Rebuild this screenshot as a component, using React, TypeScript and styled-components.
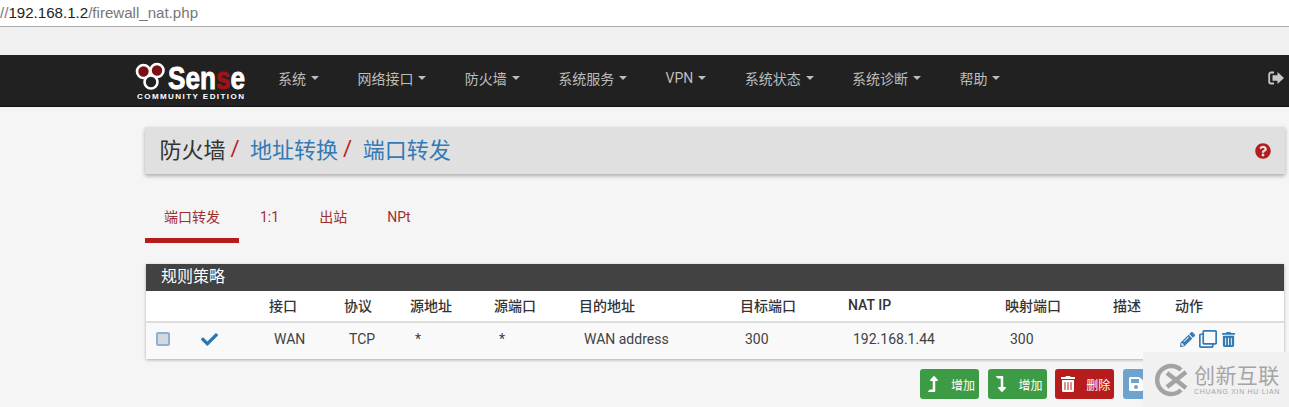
import React from 'react';
import styled, { createGlobalStyle } from 'styled-components';
import {
  FaCheck,
  FaLevelDownAlt,
  FaLevelUpAlt,
  FaPencilAlt,
  FaQuestionCircle,
  FaRegClone,
  FaSave,
  FaTrashAlt,
} from 'react-icons/fa';

const Global = createGlobalStyle`
  html, body {
    margin: 0;
    padding: 0;
    height: 407px;
    overflow: hidden;
    background: #f5f5f5;
    font-family: Roboto, "Noto Sans CJK SC", sans-serif;
    color: #333;
  }
`;

const Page = styled.div`
  position: relative;
  display: flex;
  flex-direction: column;
  width: 1289px;
  height: 407px;
  overflow: hidden;
`;

const AddressBar = styled.div`
  height: 26px;
  line-height: 26px;
  background: #fff;
  border-bottom: 1px solid #aaa;
  font-family: "Liberation Sans", sans-serif;
  font-size: 15.1px;
  color: #777;
  white-space: nowrap;
`;

const Host = styled.span`
  color: #222;
`;

const TopGap = styled.div`
  height: 28px;
  background: #f0f0f0;
`;

const Nav = styled.nav`
  display: flex;
  align-items: center;
  height: 52px;
  padding-left: 134px;
  background: #212121;
  border-bottom: 1px solid #111;
  box-sizing: border-box;
`;

const Logo = styled.svg`
  flex: none;
  width: 114px;
  height: 44px;
`;

const Menu = styled.div`
  display: flex;
  flex: 1;
  margin: 0 0 6px 30px;
  gap: 38.4px;
`;

const MenuItem = styled.span`
  display: flex;
  align-items: center;
  font-size: 14px;
  color: #bdbdbd;
  white-space: nowrap;
`;

const Caret = styled.i`
  width: 0;
  height: 0;
  margin-left: 5px;
  border-top: 4px solid #bdbdbd;
  border-left: 4px solid transparent;
  border-right: 4px solid transparent;
`;

const Logout = styled.svg`
  flex: none;
  width: 16px;
  height: 14px;
  margin: 0 5px 6px 0;
  color: #c8c8c8;
`;

const Main = styled.main`
  display: flex;
  flex-direction: column;
  padding: 20px 4px 0 145px;
`;

const Crumbs = styled.div`
  display: flex;
  align-items: center;
  justify-content: space-between;
  box-sizing: border-box;
  height: 47px;
  padding: 0 15px 5px 14.5px;
  background: #e0e0e0;
  box-shadow: 0 2px 4px rgba(0, 0, 0, 0.3);
  font-size: 22px;
`;

const CrumbTrail = styled.div`
  display: flex;
  align-items: center;
`;

const CrumbLink = styled.span`
  color: #337ab7;
`;

const Slash = styled.span`
  margin: 0 10.5px 0 5px;
  color: #b71c1c;
`;

const Help = styled.span`
  display: flex;
  margin: 5px -1px 0 0;
  font-size: 16px;
  color: #b71c1c;
`;

const Tabs = styled.div`
  display: flex;
  gap: 2px;
  height: 68px;
  margin-top: 22px;
`;

const Tab = styled.span<{ $active?: boolean }>`
  box-sizing: border-box;
  height: 47px;
  line-height: 43px;
  padding: 0 19px;
  font-size: 14px;
  color: #a0302e;
  border-bottom: ${(p) => (p.$active ? '5px solid #b71c1c' : 'none')};
`;

const Panel = styled.section`
  margin: 0 1px;
  background: #fff;
  box-shadow: 0 1px 3px rgba(0, 0, 0, 0.3);
`;

const PanelHeading = styled.h2`
  margin: 0;
  height: 27px;
  line-height: 26px;
  padding-left: 15px;
  background: #424242;
  color: #fff;
  font-size: 16px;
  font-weight: 400;
`;

const Row = styled.div<{ $head?: boolean }>`
  display: grid;
  grid-template-columns: 45px 78px 75px 66px 84px 85px 161px 108px 157px 108px 62px 1fr;
  align-items: center;
  height: ${(p) => (p.$head ? '28px' : '32px')};
  padding-bottom: ${(p) => (p.$head ? '2px' : '4px')};
  font-size: 14px;
  font-weight: ${(p) => (p.$head ? 500 : 400)};
  color: ${(p) => (p.$head ? '#333' : '#424242')};
  background: ${(p) => (p.$head ? '#fff' : '#f9f9f9')};
  border-bottom: ${(p) => (p.$head ? '2px solid #ddd' : 'none')};
`;

const Cell = styled.span`
  padding-left: 5px;
  white-space: nowrap;
`;

const CheckCell = styled.span`
  display: flex;
  padding-left: 10px;
`;

const Box = styled.i`
  width: 14px;
  height: 14px;
  box-sizing: border-box;
  background: #d3d8e0;
  border: 2px solid #8fb0d3;
  border-radius: 2px;
`;

const StatusIcon = styled.span`
  display: flex;
  padding-left: 10px;
  font-size: 17px;
  color: #2f75ad;
`;

const Actions = styled.span`
  display: flex;
  align-items: center;
  gap: 4px;
  padding-left: 5px;
  font-size: 15px;
  color: #337ab7;
`;

const Buttons = styled.div`
  display: flex;
  justify-content: flex-end;
  gap: 8.7px;
  margin-top: 10px;
  padding-right: 103px;
`;

const Button = styled.span<{ $bg: string }>`
  display: flex;
  align-items: center;
  justify-content: space-between;
  box-sizing: border-box;
  width: 59px;
  height: 30px;
  padding: 0 4px 0 5px;
  border-radius: 3px;
  background: ${(p) => p.$bg};
  color: #fff;
  font-size: 12px;
  white-space: nowrap;
`;

const Watermark = styled.aside`
  position: absolute;
  right: 0;
  bottom: 0;
  display: flex;
  align-items: center;
  gap: 5px;
  box-sizing: border-box;
  width: 146px;
  height: 55px;
  padding-left: 11px;
  background: #f1f1f1;
`;

const MarkText = styled.div`
  display: flex;
  flex-direction: column;
  color: #a5a5a5;
`;

const MarkName = styled.span`
  font-size: 21px;
  line-height: 24px;
  letter-spacing: 0.4px;
`;

const MarkPinyin = styled.span`
  font-family: "Liberation Sans", sans-serif;
  font-size: 7px;
  line-height: 8px;
  letter-spacing: 0.7px;
  white-space: nowrap;
`;

const menu = ['系统', '网络接口', '防火墙', '系统服务', 'VPN', '系统状态', '系统诊断', '帮助'];
const columns = ['接口', '协议', '源地址', '源端口', '目的地址', '目标端口', 'NAT IP', '映射端口', '描述', '动作'];
const values = ['WAN', 'TCP', '*', '*', 'WAN address', '300', '192.168.1.44', '300', ''];

const App = () => {
  return (
    <Page>
      <Global />
      <AddressBar>
        //<Host>192.168.1.2</Host>/firewall_nat.php
      </AddressBar>
      <TopGap />
      <Nav>
        <Logo viewBox="0 0 114 44">
          <g fill="#7a1015" stroke="#fff" strokeWidth="2.6">
            <circle cx="9.5" cy="12.5" r="6.5" />
            <circle cx="23" cy="11.5" r="6.5" />
            <circle cx="17" cy="23" r="6.5" fill="#212121" />
          </g>
          <g stroke="#fff" strokeWidth="0.9">
            <text x="34" y="30" fontFamily="Liberation Sans" fontWeight="700" fontSize="32" fill="#fff" textLength="77" lengthAdjust="spacingAndGlyphs">
              Sen<tspan fill="#a01218" stroke="#a01218">s</tspan>e
            </text>
          </g>
          <text x="3" y="40" fontFamily="Liberation Sans" fontWeight="700" fontSize="8" fill="#fff" textLength="107" lengthAdjust="spacing">
            COMMUNITY EDITION
          </text>
        </Logo>
        <Menu>
          {menu.map((item) => (
            <MenuItem key={item}>
              {item}
              <Caret />
            </MenuItem>
          ))}
        </Menu>
        <Logout viewBox="0 0 16 14">
          <path d="M6 1.5H3A1.8 1.8 0 0 0 1.2 3.3v7.4A1.8 1.8 0 0 0 3 12.5h3" fill="none" stroke="currentColor" strokeWidth="1.8" />
          <path d="M9.5 1 16 7l-6.5 6V9.8H4.5V4.2h5z" fill="currentColor" />
        </Logout>
      </Nav>
      <Main>
        <Crumbs>
          <CrumbTrail>
            防火墙
            <Slash>/</Slash>
            <CrumbLink>地址转换</CrumbLink>
            <Slash>/</Slash>
            <CrumbLink>端口转发</CrumbLink>
          </CrumbTrail>
          <Help>
            <FaQuestionCircle />
          </Help>
        </Crumbs>
        <Tabs>
          <Tab $active>端口转发</Tab>
          <Tab>1:1</Tab>
          <Tab>出站</Tab>
          <Tab>NPt</Tab>
        </Tabs>
        <Panel>
          <PanelHeading>规则策略</PanelHeading>
          <Row $head>
            <span />
            <span />
            {columns.map((c) => (
              <span key={c}>{c}</span>
            ))}
          </Row>
          <Row>
            <CheckCell>
              <Box />
            </CheckCell>
            <StatusIcon>
              <FaCheck />
            </StatusIcon>
            {values.map((v, i) => (
              <Cell key={i}>{v}</Cell>
            ))}
            <Actions>
              <FaPencilAlt />
              <FaRegClone size={18} />
              <FaTrashAlt />
            </Actions>
          </Row>
        </Panel>
        <Buttons>
          <Button $bg="#3d9b45">
            <FaLevelUpAlt size={16} />
            增加
          </Button>
          <Button $bg="#3d9b45">
            <FaLevelDownAlt size={16} />
            增加
          </Button>
          <Button $bg="#b71c1c">
            <FaTrashAlt size={16} />
            删除
          </Button>
          <Button $bg="#6ea3d0">
            <FaSave size={16} />
            保存
          </Button>
        </Buttons>
      </Main>
      <Watermark>
        <svg width="35" height="34" viewBox="0 0 35 34" fill="none" stroke="#a3a3a3">
          <path d="M27 7a14 14 0 1 0 0 20" strokeWidth="4.5" />
          <path d="M13 10l9 7-9 7M32 9l-10 8 10 8" strokeWidth="4.5" />
        </svg>
        <MarkText>
          <MarkName>创新互联</MarkName>
          <MarkPinyin>CHUANG XIN HU LIAN</MarkPinyin>
        </MarkText>
      </Watermark>
    </Page>
  );
};

export default App;
